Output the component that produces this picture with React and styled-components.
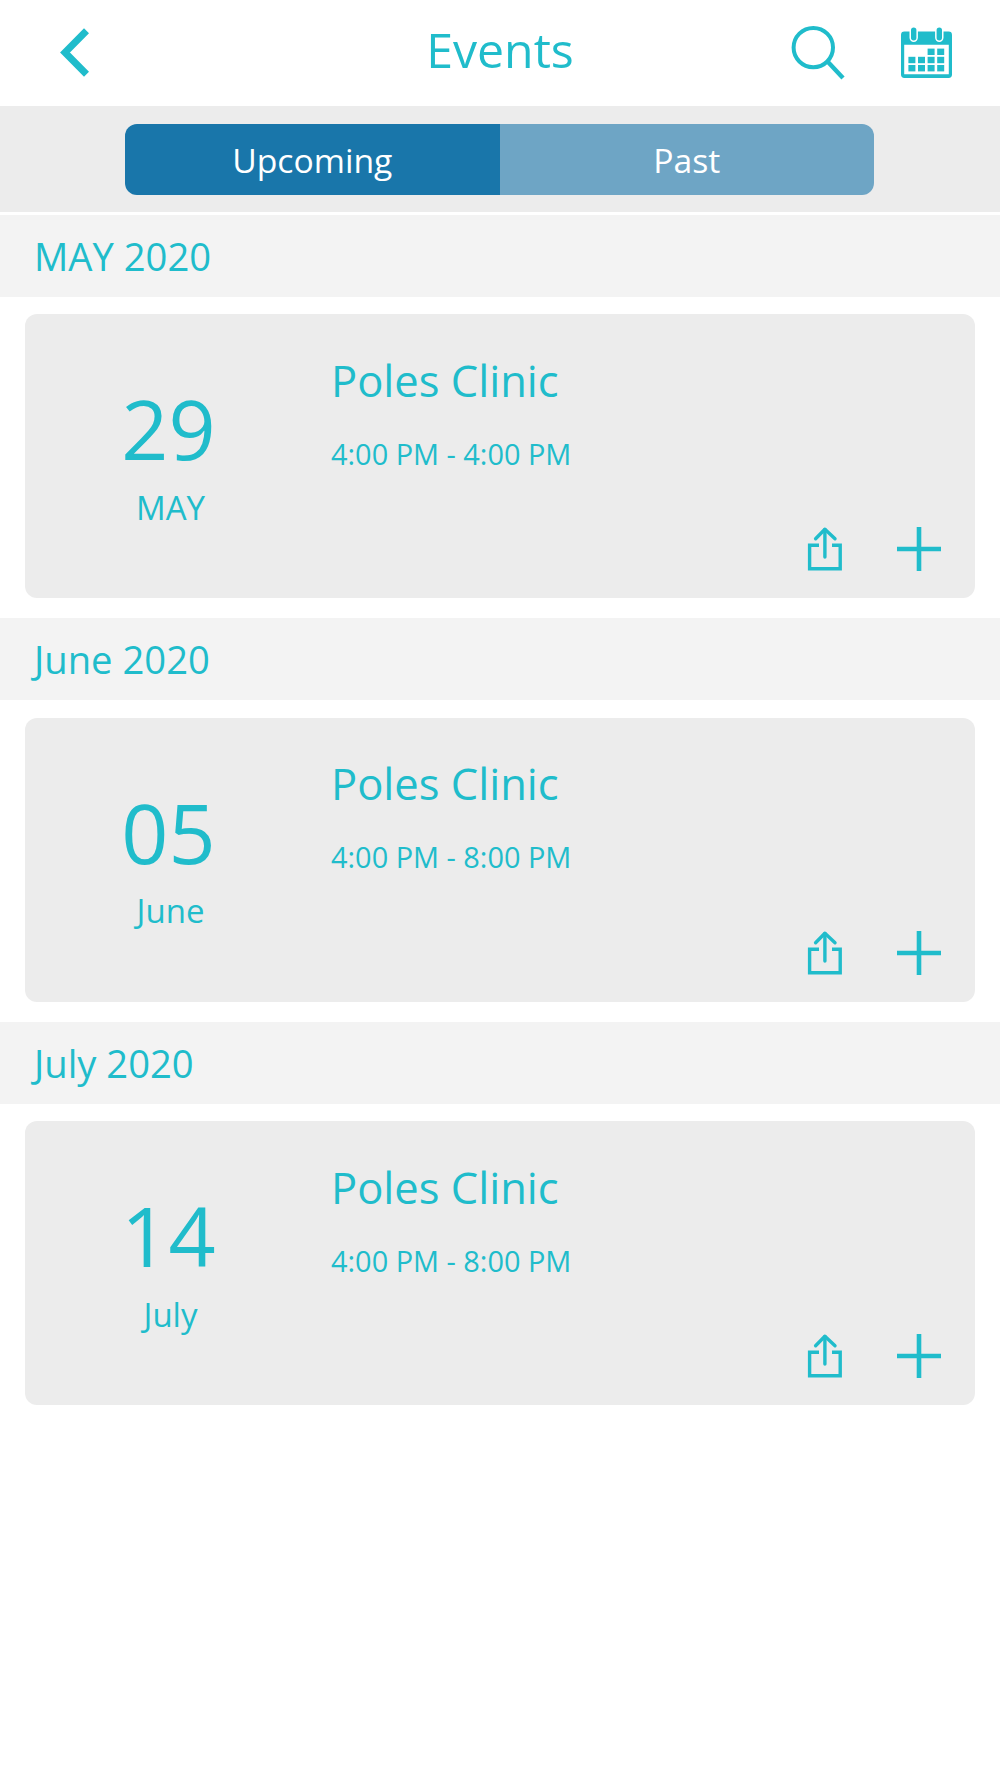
import React, { useState } from 'react';
import styled, { createGlobalStyle } from 'styled-components';

const events = [
  { title: 'MAY 2020', day: '29', month: 'MAY', name: 'Poles Clinic', time: '4:00 PM - 4:00 PM' },
  { title: 'June 2020', day: '05', month: 'June', name: 'Poles Clinic', time: '4:00 PM - 8:00 PM' },
  { title: 'July 2020', day: '14', month: 'July', name: 'Poles Clinic', time: '4:00 PM - 8:00 PM' },
];

function BackIcon() {
  return (
    <svg width="30" height="50" viewBox="0 0 30 50" fill="none" stroke="currentColor" strokeWidth="7">
      <path d="M26.5 2.8 L5 24.5 L26.5 46.2" />
    </svg>
  );
}

function SearchIcon() {
  return (
    <svg width="54" height="56" viewBox="0 0 54 56" fill="none" stroke="currentColor">
      <circle cx="22.3" cy="22.6" r="19.7" strokeWidth="4" />
      <path d="M37 37 L52 53" strokeWidth="4.4" />
    </svg>
  );
}

function CalendarIcon() {
  const cells = [
    [2, 0], [3, 0],
    [0, 1], [1, 1], [2, 1], [3, 1],
    [0, 2], [1, 2], [2, 2], [3, 2],
  ];
  return (
    <svg width="52" height="52" viewBox="0 0 52 52" fill="currentColor">
      <path
        fillRule="evenodd"
        d="M4 4.6 H48.6 Q52 4.6 52 8 V47.6 Q52 51 48.6 51 H4.4 Q1 51 1 47.6 V8 Q1 4.6 4.4 4.6 Z M4.2 17.8 V47.2 H48.8 V17.8 Z"
      />
      <Ring x="11" y="0.4" width="5.4" height="13" rx="2.7" />
      <Ring x="36.6" y="0.4" width="5.4" height="13" rx="2.7" />
      {cells.map(([col, row]) => (
        <rect key={`${col}-${row}`} x={8.4 + col * 9.6} y={21.6 + row * 8.2} width="7" height="6.4" />
      ))}
    </svg>
  );
}

function ShareIcon() {
  return (
    <svg width="36" height="46" viewBox="0 0 36 46" fill="none" stroke="currentColor" strokeWidth="3.4">
      <path d="M12 19.3 H2.6 V42.8 H33.2 V19.3 H25" />
      <path d="M17.9 31 V3.5" strokeLinecap="round" />
      <path d="M8.6 12.8 L17.9 3.2 L28 12.8" strokeLinecap="round" strokeLinejoin="round" />
    </svg>
  );
}

function PlusIcon() {
  return (
    <svg width="44" height="44" viewBox="0 0 44 44" stroke="currentColor" strokeWidth="4.6">
      <path d="M22 0 V44 M0 22 H44" />
    </svg>
  );
}

function Evento({ title, day, month, name, time }) {
  return (
    <Group>
      <MonthTitle>{title}</MonthTitle>
      <Card>
        <DateColumn>
          <Day>{day}</Day>
          <Month>{month}</Month>
        </DateColumn>
        <Info>
          <Name>{name}</Name>
          <Time>{time}</Time>
          <Actions>
            <IconButton aria-label="Share"><ShareIcon /></IconButton>
            <IconButton aria-label="Add"><PlusIcon /></IconButton>
          </Actions>
        </Info>
      </Card>
    </Group>
  );
}

export default function App() {
  const [tab, setTab] = useState('upcoming');

  return (
    <Page>
      <GlobalStyle />
      <Header>
        <BackButton aria-label="Back"><BackIcon /></BackButton>
        <Title>Events</Title>
        <HeaderActions>
          <IconButton aria-label="Search"><SearchIcon /></IconButton>
          <IconButton aria-label="Calendar"><CalendarIcon /></IconButton>
        </HeaderActions>
      </Header>
      <TabBar>
        <Tabs>
          <Tab $active={tab === 'upcoming'} onClick={() => setTab('upcoming')}>Upcoming</Tab>
          <Tab $active={tab === 'past'} onClick={() => setTab('past')}>Past</Tab>
        </Tabs>
      </TabBar>
      {events.map((event) => (
        <Evento key={event.title} {...event} />
      ))}
    </Page>
  );
}

const GlobalStyle = createGlobalStyle`
  * {
    box-sizing: border-box;
  }

  body {
    margin: 0;
    background-color: #fff;
  }
`;

const Page = styled.div`
  width: 1000px;
  min-height: 1778px;

  font-family: "Open Sans", sans-serif;
  color: #20bccb;
  background-color: #fff;
`;

const Header = styled.header`
  height: 106px;
  padding: 0 48px;

  display: grid;
  grid-template-columns: 1fr auto 1fr;
  align-items: center;
`;

const Title = styled.h1`
  margin: 0 0 8px;

  font-size: 48.2px;
  font-weight: 400;
  line-height: 66px;
`;

const HeaderActions = styled.div`
  display: flex;
  justify-content: flex-end;
  align-items: center;
  gap: 55px;
`;

const IconButton = styled.button`
  padding: 0;
  border: none;
  background: none;
  color: inherit;
  cursor: pointer;

  & > svg {
    display: block;
  }
`;

const BackButton = styled(IconButton)`
  margin-left: 12px;
  justify-self: start;
`;

/* white halo that separates the rings from the calendar body */
const Ring = styled.rect`
  stroke: #fff;
  stroke-width: 3px;
  paint-order: stroke;
`;

const TabBar = styled.nav`
  height: 106.4px;
  margin-bottom: 2.6px;
  padding-right: 1px;

  display: flex;
  align-items: center;
  justify-content: center;

  background-color: #ececec;
`;

const Tabs = styled.div`
  width: 749px;
  height: 71px;

  display: flex;
  overflow: hidden;

  border-radius: 12px;
`;

const Tab = styled.button`
  flex: 1;
  padding: 1px 0 0;
  border: none;

  font-family: inherit;
  font-size: 33.7px;
  color: #fff;

  background-color: ${(props) => (props.$active ? '#1976aa' : '#6ea5c5')};

  cursor: pointer;
`;

const Group = styled.section`
  padding-bottom: 19.9px;
`;

const MonthTitle = styled.h2`
  height: 82px;
  margin: 0 0 17.5px;
  padding-left: 34px;

  font-size: 38.2px;
  font-weight: 400;
  line-height: 82px;

  background-color: #f3f3f3;
`;

const Card = styled.article`
  height: 284px;
  margin: 0 25px;

  display: flex;

  border-radius: 12px;
  background-color: #ececec;
`;

const DateColumn = styled.div`
  width: 306px;
  padding: 64px 19px 0 0;

  display: flex;
  flex-direction: column;
  align-items: center;
`;

const Day = styled.span`
  font-size: 82.5px;
  line-height: 100px;
`;

const Month = styled.span`
  margin: 9.5px 0 0 4px;

  font-size: 33px;
  line-height: 40px;
`;

const Info = styled.div`
  flex: 1;
  padding: 36.3px 34.5px 26px 0;

  display: flex;
  flex-direction: column;
`;

const Name = styled.h3`
  margin: 0;

  font-size: 43.5px;
  font-weight: 400;
  line-height: 60px;
`;

const Time = styled.p`
  margin: 23.2px 0 0;

  font-size: 28.9px;
  line-height: 40px;
`;

const Actions = styled.div`
  margin-top: auto;

  display: flex;
  align-items: center;
  justify-content: flex-end;
  gap: 54px;
`;
